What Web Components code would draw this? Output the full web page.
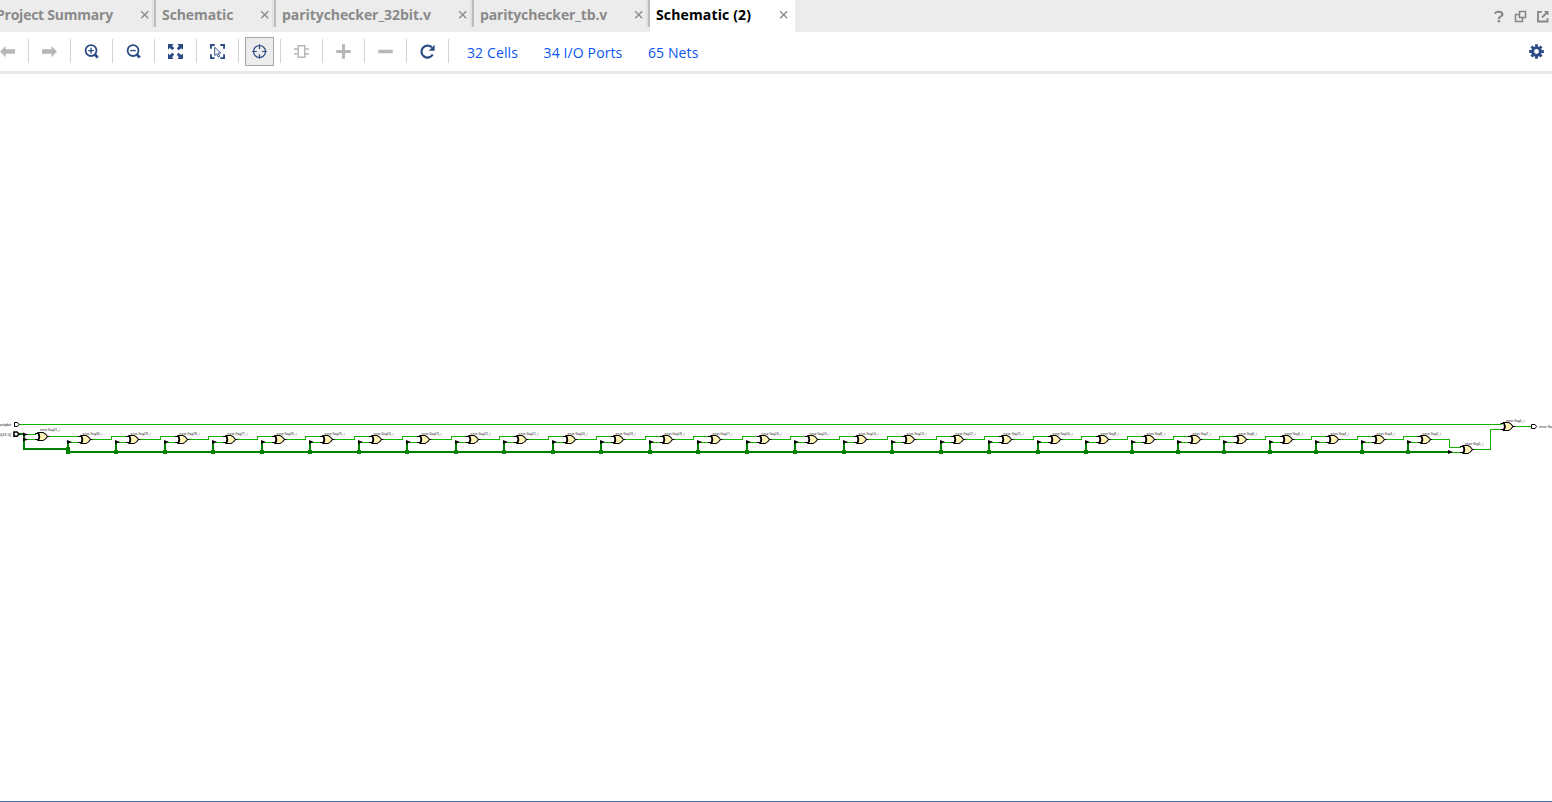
<!DOCTYPE html>
<html lang="en">
<head>
<meta charset="utf-8">
<title>Schematic</title>
<style>
html,body{margin:0;height:100%;overflow:hidden;background:#fff}
body{font-family:"Open Sans","Noto Sans",sans-serif}
</style>
</head>
<body>
<schematic-window></schematic-window>
<script>
const define = (name, html, setup) => customElements.define(name, class extends HTMLElement {
  connectedCallback() {
    if (this.shadowRoot) return;
    const root = this.attachShadow({mode: 'open'});
    root.innerHTML = html;
    if (setup) setup(this, root);
  }
});

define('editor-tab', `<style>
:host{display:flex;box-sizing:border-box;width:var(--w);height:32px;position:relative;padding:0 7px 0 6px;justify-content:space-between;color:#8a8a8a;font-weight:700;font-size:14px;line-height:30px;white-space:nowrap;flex:none}
:host([active]){background:#fff;color:#000;height:32px}
:host(:not([active]))::after{content:"";position:absolute;right:0;top:0;width:2px;height:27px;background:#bcbcbc;border-left:2px solid #e0e0e0}
svg{width:9px;height:9px;margin-top:10px;flex:none}
span{letter-spacing:var(--ls,0)}
</style><span><slot></slot></span><svg viewBox="0 0 9 9"><path d="M1.2 1.2l7 7M8.2 1.2l-7 7" stroke="#8a8a8a" stroke-width="1.3"/></svg>`);

define('tab-strip', `<style>
:host{display:flex;height:32px;background:#ececec;overflow:hidden}
.tools{margin-left:auto;display:flex;gap:8px;padding:10px 2px 0 0}
svg{width:14px;height:14px;fill:none;stroke:#858585;stroke-width:1.5;flex:none}
</style><slot></slot><div class="tools">
<svg viewBox="0 0 14 14"><path d="M2.8 3.6C3.6 2 4.6 1.8 6.6 1.8c4 0 5 3.2 2.2 4.6C7.3 7.1 6.8 7.5 6.8 9.2M5.6 11.3h2.6" stroke-width="2"/></svg>
<svg viewBox="0 0 14 14"><path d="M5.5 1.5h6v6h-6zM5.5 4.5h-4v7h7v-4"/></svg>
<svg viewBox="0 0 14 14"><path d="M6 1.8H2v9.7h9.5V8M6 7.5l5-5" stroke-width="1.8"/><path d="M8 1h4.5v4.5z" fill="#858585" stroke="none"/></svg>
</div>`);

const icons = {
  back: '<path d="M0 8l6-6v3.5h10v5H6V14z" fill="#b7b7b7"/>',
  next: '<path d="M16 8l-6-6v3.5H0v5h10V14z" fill="#b7b7b7"/>',
  zoomin: '<g fill="none" stroke="#2d4c85"><circle cx="7.5" cy="7" r="5.8" stroke-width="1.9"/><path d="M4.5 7h6M7.5 4v6" stroke-width="1.4"/><path d="M11.5 11l3.2 3.6" stroke-width="3"/></g>',
  zoomout: '<g fill="none" stroke="#2d4c85"><circle cx="7.5" cy="7" r="5.8" stroke-width="1.9"/><path d="M4.5 7h6" stroke-width="1.4"/><path d="M11.5 11l3.2 3.6" stroke-width="3"/></g>',
  fit: '<g fill="#2d4c85"><path d="M0 0h6L4.4 1.8 6.7 4.5l-2 2-2.8-2.3L0 6z"/><path d="M16 0v6l-1.8-1.6-2.8 2.3-2-2 2.3-2.8L10 0z"/><path d="M0 16v-6l1.8 1.6 2.8-2.3 2 2-2.3 2.8L6 16z"/><path d="M16 16h-6l1.6-1.8-2.3-2.8 2-2 2.8 2.3L16 10z"/></g>',
  select: '<path d="M1 5V1h4M11 1h4v4M1 11v4h4M11 15h4v-4" fill="none" stroke="#2d4c85" stroke-width="2"/><path d="M5 3.5l6.5 6-2.8.2 1.7 3.5-1.6.8-1.6-3.5L5 12.3z" fill="#fff" stroke="#2d4c85"/>',
  target: '<g fill="none" stroke="#2d4c85" stroke-width="1.3"><circle cx="8" cy="8" r="6.4"/><path d="M8 .2v5M8 10.8v5M.2 8h5M10.8 8h5"/></g>',
  chip: '<g fill="none" stroke="#b7b7b7" stroke-width="1.5"><path d="M4.5 1.8h7v12.4h-7zM0 5.3h4.5M0 10.7h4.5M11.5 5.3H16M11.5 10.7H16"/></g>',
  plus: '<path d="M8 .3v15.4M.3 8h15.4" stroke="#b7b7b7" stroke-width="3.2"/>',
  minus: '<path d="M.3 8h15.4" stroke="#b7b7b7" stroke-width="3.8"/>',
  reload: '<path d="M13.6 11.2A6.4 6.4 0 1 1 12.6 3.6" fill="none" stroke="#2d4c85" stroke-width="2.3"/><path d="M15.6.8v6.4H9.3z" fill="#2d4c85"/>',
  gear: '<g fill="none" stroke="#2d4c85"><circle cx="8" cy="8" r="4.1" stroke-width="3"/><path d="M8 .2v3M8 12.8v3M.2 8h3M12.8 8h3M2.6 2.6l2 2M11.4 11.4l2 2M13.4 2.6l-2 2M4.6 11.4l-2 2" stroke-width="3"/></g>'
};
define('tool-button', `<style>
:host{display:flex;box-sizing:border-box;width:42px;height:24px;border-right:1px solid #d4d4d4;align-items:center;justify-content:center;flex:none}
:host([plain]){border:0;width:29px}
div{width:27px;height:27px;border:1px solid transparent;display:flex;align-items:center;justify-content:center;flex:none}
:host([active]) div{background:#ececec;border-color:#a6a6a6}
svg{width:15px;height:15px;flex:none}
</style><div><svg viewBox="0 0 16 16"></svg></div>`, (el, root) => {
  root.querySelector('svg').innerHTML = icons[el.getAttribute('icon')];
});

define('tool-bar', `<style>
:host{display:flex;box-sizing:border-box;height:42px;padding-top:7px;border-bottom:3px solid #e7e7e7;background:#fff}
.links{display:flex;gap:25.5px;padding-left:18px;font-size:14px;line-height:28px;color:#0a55f0;white-space:nowrap;letter-spacing:.12px}
.end{margin-left:auto;padding-right:1px}
</style><slot></slot><div class="links"><slot name="link"></slot></div><div class="end"><slot name="end"></slot></div>`);

define('net-schematic', `<style>
:host{display:block;flex:1;min-height:0;overflow:hidden}
svg{display:block;width:1552px;height:727px;font-family:"Liberation Sans",Arial,sans-serif;font-size:4.4px}
</style><svg viewBox="0 74 1552 727"></svg>`, (el, root) => {
  const wire = d => `<path d="${d}" fill="none" stroke="#18b000" stroke-width="1" shape-rendering="crispEdges"/>`;
  const bus = d => `<path d="${d}" fill="none" stroke="#008000" stroke-width="2" shape-rendering="crispEdges"/>`;
  const label = (x, y, t, w) => `<text x="${x}" y="${y}" fill="#222" textLength="${w}" lengthAdjust="spacingAndGlyphs">${t}</text>`;
  const gate = (x, y) => `<path d="M${x+1} ${y-4}h5q2.4 .8 4.5 4q-2.1 3.2-4.5 4h-5q3-4 0-8z" fill="#fff6b8" stroke="#000" stroke-width="1.1"/><path d="M${x-2} ${y-3}H${x+2}M${x-2} ${y+3}H${x+2}M${x+10} ${y}h2.5" fill="none" stroke="#000" stroke-width="1.2"/><path d="M${x+.8} ${y-4}q3 4 0 8" fill="none" stroke="#000" stroke-width="1.7"/>`;
  const pin = (x, y) => `<path d="M${x} ${y-2}l5 2-5 2z" fill="#000"/>`;
  const dots = [68,116,165,213,262,310,359,407,456,504,553,601,650,698,747,795,844,892,941,989,1038,1086,1132,1178,1224,1270,1316,1362,1408];
  let s = wire('M19 424.5H1502') + bus('M19 434H24V449H68V452H1450');
  s += wire('M24 434.5H36M24 439.5H36M48 436.5H81') + pin(23, 434.5) + pin(23, 439.5);
  dots.forEach((d, i) => {
    const next = dots[i + 1];
    s += bus(`M${d} 452V442`) + `<rect x="${d-2}" y="450" width="4" height="4" fill="#008000"/>`;
    s += wire(`M${d} 442.5H${d+13}`) + pin(d - 1, 442);
    if (next) s += wire(`M${d+24} 439.5H${next-4.5}V436.5H${next+13}`);
    s += gate(d + 12, 439.5) + label(d + 14.5, 434.5, `error flag${30 - i}_i`, 30 - i > 9 ? 20 : 18.5);
  });
  s += '<rect x="66" y="447" width="4" height="4" fill="#008000"/>';
  s += gate(37, 436.5) + label(40, 431, 'error flag31_i', 20);
  s += wire('M1432 439.5H1449.5V447.5H1461M1450 452.5H1461M1474 449.5H1490.5V429.5H1502M1514 426.5H1531');
  s += pin(1448, 452) + gate(1462, 449.5) + gate(1502.5, 426.5);
  s += label(1465, 444.5, 'error flag1_i', 18.5) + label(1506, 421.5, 'error flag0_i', 18.5);
  s += '<path d="M14.5 422.5h3l1.5 2-1.5 2h-3z" fill="#fff" stroke="#000"/><path d="M14 432h3l2 2-2 2.2h-3z" fill="#fff" stroke="#000" stroke-width="1.6"/><path d="M1531.5 424.5h3.5l1.5 2-1.5 2h-3.5z" fill="#fff" stroke="#000"/>';
  s += label(-3, 426, 'paritybit', 14) + label(-2, 436, 'in[31:0]', 13) + label(1539, 428, 'error flag', 15);
  root.querySelector('svg').innerHTML = s;
});

define('schematic-window', `<style>
:host{display:flex;flex-direction:column;box-sizing:border-box;width:1552px;height:802px;border-bottom:1px solid #4379b8;background:#fff;overflow:hidden}
.first{margin-left:-10px}
tool-button:first-child{margin-left:-13px}
</style>
<tab-strip>
<editor-tab class="first" style="--w:166px;--ls:-.24px">Project Summary</editor-tab><editor-tab style="--w:120px;--ls:-.08px">Schematic</editor-tab><editor-tab style="--w:198px;--ls:-.06px">paritychecker_32bit.v</editor-tab><editor-tab style="--w:176px;--ls:-.15px">paritychecker_tb.v</editor-tab><editor-tab active style="--w:145px;--ls:.14px">Schematic (2)</editor-tab>
</tab-strip>
<tool-bar>
<tool-button icon="back"></tool-button><tool-button icon="next"></tool-button><tool-button icon="zoomin"></tool-button><tool-button icon="zoomout"></tool-button><tool-button icon="fit"></tool-button><tool-button icon="select"></tool-button><tool-button icon="target" active></tool-button><tool-button icon="chip"></tool-button><tool-button icon="plus"></tool-button><tool-button icon="minus"></tool-button><tool-button icon="reload"></tool-button>
<span slot="link">32 Cells</span><span slot="link">34 I/O Ports</span><span slot="link">65 Nets</span>
<tool-button slot="end" icon="gear" plain></tool-button>
</tool-bar>
<net-schematic></net-schematic>`);
</script>
</body>
</html>
